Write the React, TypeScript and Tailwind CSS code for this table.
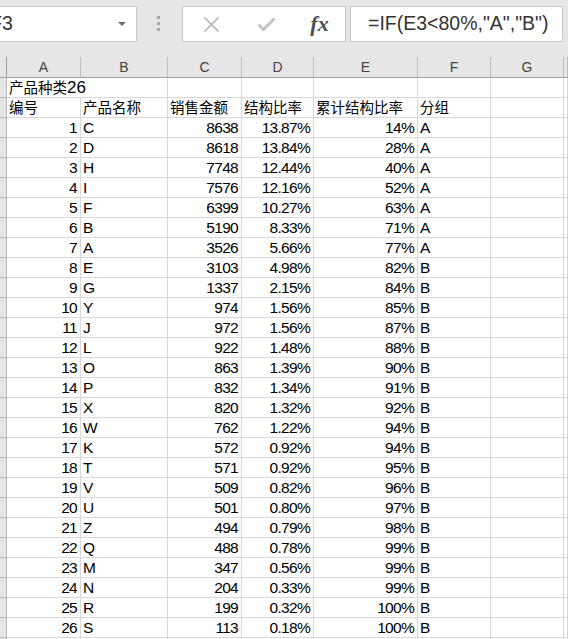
import React from 'react';

const rows: [number, string, number, string, string, string][] = [
  [1, 'C', 8638, '13.87%', '14%', 'A'],
  [2, 'D', 8618, '13.84%', '28%', 'A'],
  [3, 'H', 7748, '12.44%', '40%', 'A'],
  [4, 'I', 7576, '12.16%', '52%', 'A'],
  [5, 'F', 6399, '10.27%', '63%', 'A'],
  [6, 'B', 5190, '8.33%', '71%', 'A'],
  [7, 'A', 3526, '5.66%', '77%', 'A'],
  [8, 'E', 3103, '4.98%', '82%', 'B'],
  [9, 'G', 1337, '2.15%', '84%', 'B'],
  [10, 'Y', 974, '1.56%', '85%', 'B'],
  [11, 'J', 972, '1.56%', '87%', 'B'],
  [12, 'L', 922, '1.48%', '88%', 'B'],
  [13, 'O', 863, '1.39%', '90%', 'B'],
  [14, 'P', 832, '1.34%', '91%', 'B'],
  [15, 'X', 820, '1.32%', '92%', 'B'],
  [16, 'W', 762, '1.22%', '94%', 'B'],
  [17, 'K', 572, '0.92%', '94%', 'B'],
  [18, 'T', 571, '0.92%', '95%', 'B'],
  [19, 'V', 509, '0.82%', '96%', 'B'],
  [20, 'U', 501, '0.80%', '97%', 'B'],
  [21, 'Z', 494, '0.79%', '98%', 'B'],
  [22, 'Q', 488, '0.78%', '99%', 'B'],
  [23, 'M', 347, '0.56%', '99%', 'B'],
  [24, 'N', 204, '0.33%', '99%', 'B'],
  [25, 'R', 199, '0.32%', '100%', 'B'],
  [26, 'S', 113, '0.18%', '100%', 'B'],
];

const headers = ['编号', '产品名称', '销售金额', '结构比率', '累计结构比率', '分组'];

function Cell({ children, right, className = '' }: { children?: React.ReactNode; right?: boolean; className?: string }) {
  return (
    <div
      className={`flex h-[20px] items-end overflow-visible whitespace-nowrap border-r border-b border-[#d9d9d9] bg-white pb-[1px] leading-[16px] ${
        right ? 'justify-end pr-[3px]' : 'pl-[2px]'
      } ${className}`}
    >
      {children}
    </div>
  );
}

function RowHead() {
  return <div className="h-[20px] border-r border-b border-[#b8b8b8] bg-[#e6e6e6]" />;
}

const num = 'text-[15.5px] tracking-[-0.7px]';

export default function App() {
  return (
    <div className="h-[639px] w-[568px] overflow-hidden bg-[#e6e6e6] font-['Liberation_Sans','Noto_Sans_CJK_SC',sans-serif] text-black">
      {/* formula bar */}
      <div className="flex h-[57px] items-start pt-[6px]">
        <div className="-ml-[2px] flex h-[36px] w-[139px] items-center justify-between overflow-hidden border border-[#c6c6c6] bg-white">
          <span className="-ml-[9px] text-[19.5px] text-[#333]">F3</span>
          <span className="mr-[10px] h-0 w-0 border-x-[4px] border-t-[4px] border-x-transparent border-t-[#6b6b6b]" />
        </div>
        <div className="ml-[20px] flex flex-col gap-[3px] pt-[10px]">
          <span className="h-[3px] w-[3px] bg-[#a8a8a8]" />
          <span className="h-[3px] w-[3px] bg-[#a8a8a8]" />
          <span className="h-[3px] w-[3px] bg-[#a8a8a8]" />
        </div>
        <div className="ml-[22px] grid h-[36px] w-[164px] grid-cols-[56px_55px_51px] items-center border border-[#c6c6c6] bg-white">
          <div className="flex justify-center">
            <svg width="17" height="17" viewBox="0 0 17 17">
              <path d="M1.5 1.5 L15.5 15.5 M15.5 1.5 L1.5 15.5" stroke="#b3b3b3" strokeWidth="1.6" fill="none" />
            </svg>
          </div>
          <div className="flex justify-center">
            <svg width="19" height="15" viewBox="0 0 19 15">
              <path d="M1.5 7.5 L6.5 12.5 L17.5 1.5" stroke="#c4c4c4" strokeWidth="3" fill="none" />
            </svg>
          </div>
          <div className="flex justify-center pb-[2px] font-['Liberation_Serif',serif] text-[22px] font-semibold italic text-[#505050]">
            fx
          </div>
        </div>
        <div className="mr-[5px] ml-[4px] flex h-[36px] flex-1 items-center border border-[#c6c6c6] bg-white pl-[17px] text-[19.5px] text-[#333]">
          =IF(E3&lt;80%,"A","B")
        </div>
      </div>

      {/* sheet */}
      <div className="grid grid-cols-[7px_74px_87px_74px_72px_104px_73px_73px_1fr] text-[16px]">
        <div className="h-[21px] border-r border-b border-[#9f9f9f] bg-[#e6e6e6]" />
        {['A', 'B', 'C', 'D', 'E', 'F', 'G', ''].map((l, i) => (
          <div
            key={i}
            className="flex h-[21px] items-end justify-center border-r border-b border-[#9f9f9f] border-r-[#bdbdbd] bg-[#e6e6e6] pb-[2px] text-[14px] leading-[16px] text-[#444]"
          >
            {l}
          </div>
        ))}

        <RowHead />
        <Cell className="col-span-2 text-[14.5px]">
          产品种类<span className="text-[17px]">26</span>
        </Cell>
        <Cell />
        <Cell />
        <Cell />
        <Cell />
        <Cell />
        <Cell />

        <RowHead />
        {headers.map((h) => (
          <Cell key={h} className="text-[14.5px]">
            {h}
          </Cell>
        ))}
        <Cell />
        <Cell />

        {rows.map((r) => (
          <React.Fragment key={r[0]}>
            <RowHead />
            <Cell right className={num}>{r[0]}</Cell>
            <Cell className={num}>{r[1]}</Cell>
            <Cell right className={num}>{r[2]}</Cell>
            <Cell right className={num}>{r[3]}</Cell>
            <Cell right className={num}>{r[4]}</Cell>
            <Cell className={num}>{r[5]}</Cell>
            <Cell />
            <Cell />
          </React.Fragment>
        ))}
        <RowHead />
        {Array.from({ length: 8 }).map((_, i) => (
          <Cell key={i} />
        ))}
      </div>
    </div>
  );
}
